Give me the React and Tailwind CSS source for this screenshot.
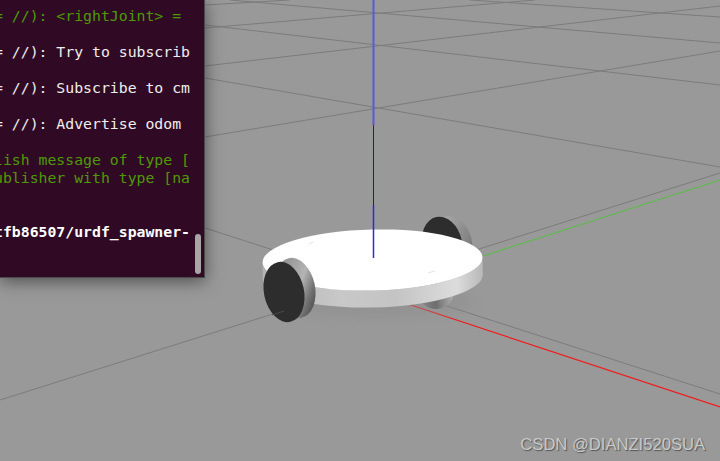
const terminalLines = [
  { text: '= //): <rightJoint> =', tone: 'green' },
  { text: '' },
  { text: '= //): Try to subscrib' },
  { text: '' },
  { text: '= //): Subscribe to cm' },
  { text: '' },
  { text: '= //): Advertise odom' },
  { text: '' },
  { text: 'lish message of type [', tone: 'green' },
  { text: 'ublisher with type [na', tone: 'green' },
  { text: '' },
  { text: '' },
  { text: 'tfb86507/urdf_spawner-', tone: 'bold' },
]

// ground grid, in picture coordinates
const gridLines = [
  [230, 0, 720, 43],
  [205, 25, 720, 85],
  [205, 78, 720, 167],
  [470, 0, 720, 17],
  [205, 137, 720, 51],
  [205, 66, 720, 6],
  [205, 28, 535, 0],
  [205, 5, 290, 0],
  [205, 228, 720, 394],
  [0, 400, 720, 173],
]

function Scene() {
  return (
    <svg className="absolute inset-0" width="720" height="461" viewBox="0 0 720 461">
      <defs>
        <linearGradient id="discSide" x1="0" x2="1" y1="0" y2="0">
          <stop offset="0" stopColor="#b4b4b4" />
          <stop offset="0.35" stopColor="#c8c8c8" />
          <stop offset="0.6" stopColor="#c4c4c4" />
          <stop offset="0.88" stopColor="#dcdcdc" />
          <stop offset="1" stopColor="#b8b8b8" />
        </linearGradient>
        <linearGradient id="frontRim" x1="0" x2="1" y1="0" y2="1">
          <stop offset="0" stopColor="#7e7e7e" />
          <stop offset="0.55" stopColor="#b4b4b4" />
          <stop offset="0.75" stopColor="#707070" />
          <stop offset="1" stopColor="#343434" />
        </linearGradient>
        <linearGradient id="backRim" x1="0" x2="1" y1="0" y2="1">
          <stop offset="0" stopColor="#bcbcbc" />
          <stop offset="1" stopColor="#6c6c6c" />
        </linearGradient>
        <linearGradient id="backBottom" x1="0" x2="1" y1="0" y2="0">
          <stop offset="0" stopColor="#8c8c8c" />
          <stop offset="0.5" stopColor="#6e6e6e" />
          <stop offset="1" stopColor="#b0b0b0" />
        </linearGradient>
        <filter id="soft" x="-20%" y="-50%" width="140%" height="200%">
          <feGaussianBlur stdDeviation="6" />
        </filter>
      </defs>

      {gridLines.map(([x1, y1, x2, y2], i) => (
        <line key={i} x1={x1} y1={y1} x2={x2} y2={y2} stroke="#7c7c7c" strokeWidth="1" />
      ))}

      <line x1="483" y1="256" x2="720" y2="180" stroke="#55c040" strokeWidth="1" />
      <line x1="408" y1="304" x2="720" y2="407" stroke="#f01c1c" strokeWidth="1.2" />

      <ellipse cx="375" cy="302" rx="100" ry="16" fill="#8c8c8c" opacity="0.45" filter="url(#soft)" />

      {/* back wheel */}
      <ellipse cx="450" cy="243" rx="22" ry="27" fill="url(#backRim)" transform="rotate(-12 450 243)" />
      <ellipse cx="442" cy="244" rx="20" ry="27.5" fill="#2d2d2d" transform="rotate(-12 442 244)" />
      <ellipse cx="436" cy="292" rx="18" ry="17" fill="url(#backBottom)" />

      {/* disc */}
      <g transform="translate(372.5 260) rotate(-1.3)">
        <path d="M-110 0 A110 30.5 0 0 0 110 0 L110 17 A110 30.5 0 0 1 -110 17 Z" fill="url(#discSide)" />
        <ellipse cx="0" cy="0" rx="110" ry="30.5" fill="#ffffff" />
      </g>
      <path d="M309 244 L313 242" stroke="#e4e4e4" strokeWidth="1" />
      <path d="M428 273 L435 271" stroke="#e4e4e4" strokeWidth="1" />

      {/* front wheel */}
      <ellipse cx="295" cy="288" rx="20" ry="30.5" fill="url(#frontRim)" transform="rotate(-12 295 288)" />
      <ellipse cx="284" cy="292" rx="20" ry="30.5" fill="#2d2d2d" transform="rotate(-12 284 292)" />
      <line x1="272" y1="315" x2="284" y2="311" stroke="#4a4a4a" strokeWidth="1" />

      {/* z axis */}
      <line x1="373.5" y1="0" x2="373.5" y2="125" stroke="#5a5ad8" strokeWidth="2" />
      <line x1="373.5" y1="125" x2="373.5" y2="205" stroke="#1414c8" strokeWidth="1" />
      <line x1="373.5" y1="205" x2="373.5" y2="258" stroke="#2a2ad8" strokeWidth="1.5" />
    </svg>
  )
}

function Terminal() {
  return (
    <div className="absolute top-0 left-0 w-[205px] h-[278px] overflow-hidden bg-[#300a24] border-r border-b border-[#4a4a4a] shadow-[0_3px_16px_rgba(0,0,0,0.5)] pt-[7px] font-['DejaVu_Sans_Mono',monospace] text-[14.8px] leading-[18px]">
      <div className="-ml-[6px]">
        {terminalLines.map((line, i) => (
          <div
            key={i}
            className={
              'h-[18px] whitespace-pre ' +
              (line.tone === 'green'
                ? 'text-[#4e9a06]'
                : line.tone === 'bold'
                ? 'text-white font-bold'
                : 'text-[#eeeeec]')
            }
          >
            {line.text}
          </div>
        ))}
      </div>
      <div className="absolute top-[234px] left-[195px] w-[6px] h-[40px] rounded-full bg-[#a9a5a7]" />
    </div>
  )
}

export default function App() {
  return (
    <div className="relative w-[720px] h-[461px] overflow-hidden bg-[#999999]">
      <Scene />
      <Terminal />
      <div className="absolute right-[15px] bottom-[6px] font-['Liberation_Sans',sans-serif] text-[16.6px] leading-[20px] text-[#c8c8c8] [text-shadow:1px_1px_1px_rgba(0,0,0,0.45)]">
        CSDN @DIANZI520SUA
      </div>
    </div>
  )
}
